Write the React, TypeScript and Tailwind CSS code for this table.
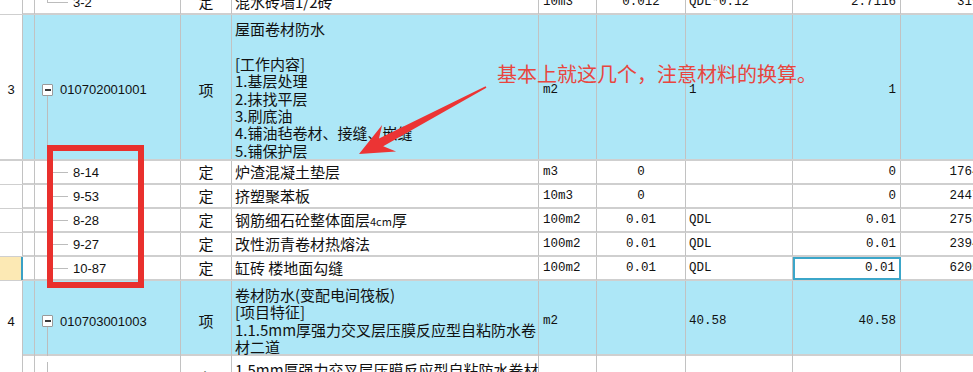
import React from 'react';

const GRID = 'grid grid-cols-[23px_12px_146px_51px_307px_58px_89px_107px_108px_110px]';
const LINE = 'border-r border-[#c2c2c2]';
const MONO = "font-['Liberation_Mono',monospace] text-[12.5px]";
const SANS = "font-['Liberation_Sans',sans-serif] text-[13px]";

function MinusBox() {
  return (
    <div className="flex h-[12px] w-[11px] shrink-0 items-center justify-center rounded-[1px] border border-[#9a9a9a] bg-white">
      <div className="h-[2px] w-[6px] bg-[#3c3c3c]" />
    </div>
  );
}

// 展开的清单项：带减号框，下方连线
function ParentTree({ code }: { code: string }) {
  return (
    <div className="flex h-full">
      <div className="flex w-[25px] shrink-0 flex-col items-center">
        <div className="flex-1" />
        <MinusBox />
        <div className="w-px flex-1 bg-[#bcbcbc]" />
      </div>
      <span className={`self-center ${SANS}`}>{code}</span>
    </div>
  );
}

// 子目：├─ 或 └─
function ChildTree({ code, last }: { code: string; last?: boolean }) {
  return (
    <div className="flex h-full">
      <div className="flex w-[38px] shrink-0 pl-[12px]">
        <div className="flex w-[21px] flex-col">
          <div className="flex-1 border-b border-l border-[#bcbcbc]" />
          <div className={`flex-1 ${last ? '' : 'border-l border-[#bcbcbc]'}`} />
        </div>
      </div>
      <span className={`self-center ${SANS}`}>{code}</span>
    </div>
  );
}

type RowData = {
  h: string;
  blue?: boolean;
  current?: boolean;
  no?: string;
  tree: React.ReactNode;
  type?: string;
  name: React.ReactNode;
  tall?: boolean;
  unit?: string;
  content?: string;
  expr?: string;
  qty?: string;
  price?: string;
  picked?: boolean;
};

function Row(r: RowData) {
  const fill = r.blue ? 'bg-[#ade7f7]' : 'bg-white';
  // 多行的行里，居中的单元格整体略偏下
  const drop = r.tall ? 'pt-[6px]' : '';
  return (
    <div className={`${GRID} ${r.h} border-b-2 border-[#cfcfcf] ${fill}`}>
      <div
        className={`flex items-center justify-center ${drop} ${SANS} ${
          r.current ? 'border-r-2 border-[#3aa0c6] bg-[#fce9b4]' : `${LINE} bg-white`
        }`}
      >
        {r.no}
      </div>
      <div className={LINE} />
      <div className={`${LINE} ${drop}`}>{r.tree}</div>
      <div className={`flex items-center justify-center ${drop} ${LINE}`}>{r.type}</div>
      <div className={`${LINE} px-[3px] ${r.tall ? 'pt-[5px] leading-[17.4px]' : 'flex items-center'}`}>
        {r.name}
      </div>
      <div className={`flex items-center pl-[4px] ${drop} ${MONO} ${LINE}`}>{r.unit}</div>
      <div className={`flex items-center justify-center ${drop} ${MONO} ${LINE}`}>{r.content}</div>
      <div className={`flex items-center pl-[3px] ${drop} ${MONO} ${LINE}`}>{r.expr}</div>
      <div
        className={`flex items-center justify-end pr-[4px] ${drop} ${MONO} ${
          r.picked ? 'border-2 border-[#3ba6c9]' : LINE
        }`}
      >
        {r.qty}
      </div>
      <div className={`flex items-center justify-end pr-[8px] ${drop} ${MONO} ${LINE}`}>{r.price}</div>
    </div>
  );
}

function Lines({ items }: { items: string[] }) {
  return (
    <>
      {items.map((t, i) => (
        <div key={i} className="h-[17.4px] whitespace-nowrap">
          {t}
        </div>
      ))}
    </>
  );
}

const App: React.FC = () => {
  return (
    <div className="relative h-[372px] w-[973px] overflow-hidden bg-white font-['Noto_Sans_CJK_SC',sans-serif] text-[15px] text-[#111]">
      <div className="mt-[-9px] flex w-[1011px] flex-col">
        <Row
          h="h-[24px]"
          tree={<ChildTree code="3-2" last />}
          type="定"
          name="混水砖墙1/2砖"
          unit="10m3"
          content="0.012"
          expr="QDL*0.12"
          qty="2.7116"
          price="319.69"
        />
        <Row
          h="h-[146px]"
          blue
          tall
          no="3"
          tree={<ParentTree code="010702001001" />}
          type="项"
          name={
            <Lines
              items={[
                '屋面卷材防水',
                '',
                '[工作内容]',
                '1.基层处理',
                '2.抹找平层',
                '3.刷底油',
                '4.铺油毡卷材、接缝、嵌缝',
                '5.铺保护层',
              ]}
            />
          }
          unit="m2"
          expr="1"
          qty="1"
        />
        <Row h="h-[24px]" tree={<ChildTree code="8-14" />} type="定" name="炉渣混凝土垫层" unit="m3" content="0" qty="0" price="1764.52" />
        <Row h="h-[24px]" tree={<ChildTree code="9-53" />} type="定" name="挤塑聚苯板" unit="10m3" content="0" qty="0" price="2447.07" />
        <Row
          h="h-[24px]"
          tree={<ChildTree code="8-28" />}
          type="定"
          name={
            <span>
              钢筋细石砼整体面层<span className="text-[11px]">4cm</span>厚
            </span>
          }
          unit="100m2"
          content="0.01"
          expr="QDL"
          qty="0.01"
          price="2753.71"
        />
        <Row h="h-[24px]" tree={<ChildTree code="9-27" />} type="定" name="改性沥青卷材热熔法" unit="100m2" content="0.01" expr="QDL" qty="0.01" price="2394.73" />
        <Row
          h="h-[24px]"
          current
          picked
          tree={<ChildTree code="10-87" last />}
          type="定"
          name="缸砖 楼地面勾缝"
          unit="100m2"
          content="0.01"
          expr="QDL"
          qty="0.01"
          price="6205.28"
        />
        <Row
          h="h-[75px]"
          blue
          tall
          no="4"
          tree={<ParentTree code="010703001003" />}
          type="项"
          name={<Lines items={['卷材防水(变配电间筏板)', '[项目特征]', '1.1.5mm厚强力交叉层压膜反应型自粘防水卷', '材二道']} />}
          unit="m2"
          expr="40.58"
          qty="40.58"
        />
        <Row
          h="h-[40px]"
          tall
          tree={<ChildTree code="" />}
          type="主"
          name={<Lines items={['1.5mm厚强力交叉层压膜反应型自粘防水卷材']} />}
        />
      </div>

      {/* 批注：红框、箭头、文字 */}
      <div className="absolute left-[47px] top-[145px] h-[143px] w-[97px] border-[6px] border-[#e9302d]" />
      <svg className="pointer-events-none absolute left-0 top-0" width="973" height="372">
        <polygon
          points="486.4,87.7 383.2,146.3 396.1,151.4 359,154 382.1,124.9 379,138.4 485.6,86.3"
          fill="#ec3434"
        />
      </svg>
      <div className="absolute left-[497px] top-[64px] whitespace-nowrap text-[20px] leading-none text-[#e8463f]">
        基本上就这几个，注意材料的换算。
      </div>
    </div>
  );
};

export default App;
